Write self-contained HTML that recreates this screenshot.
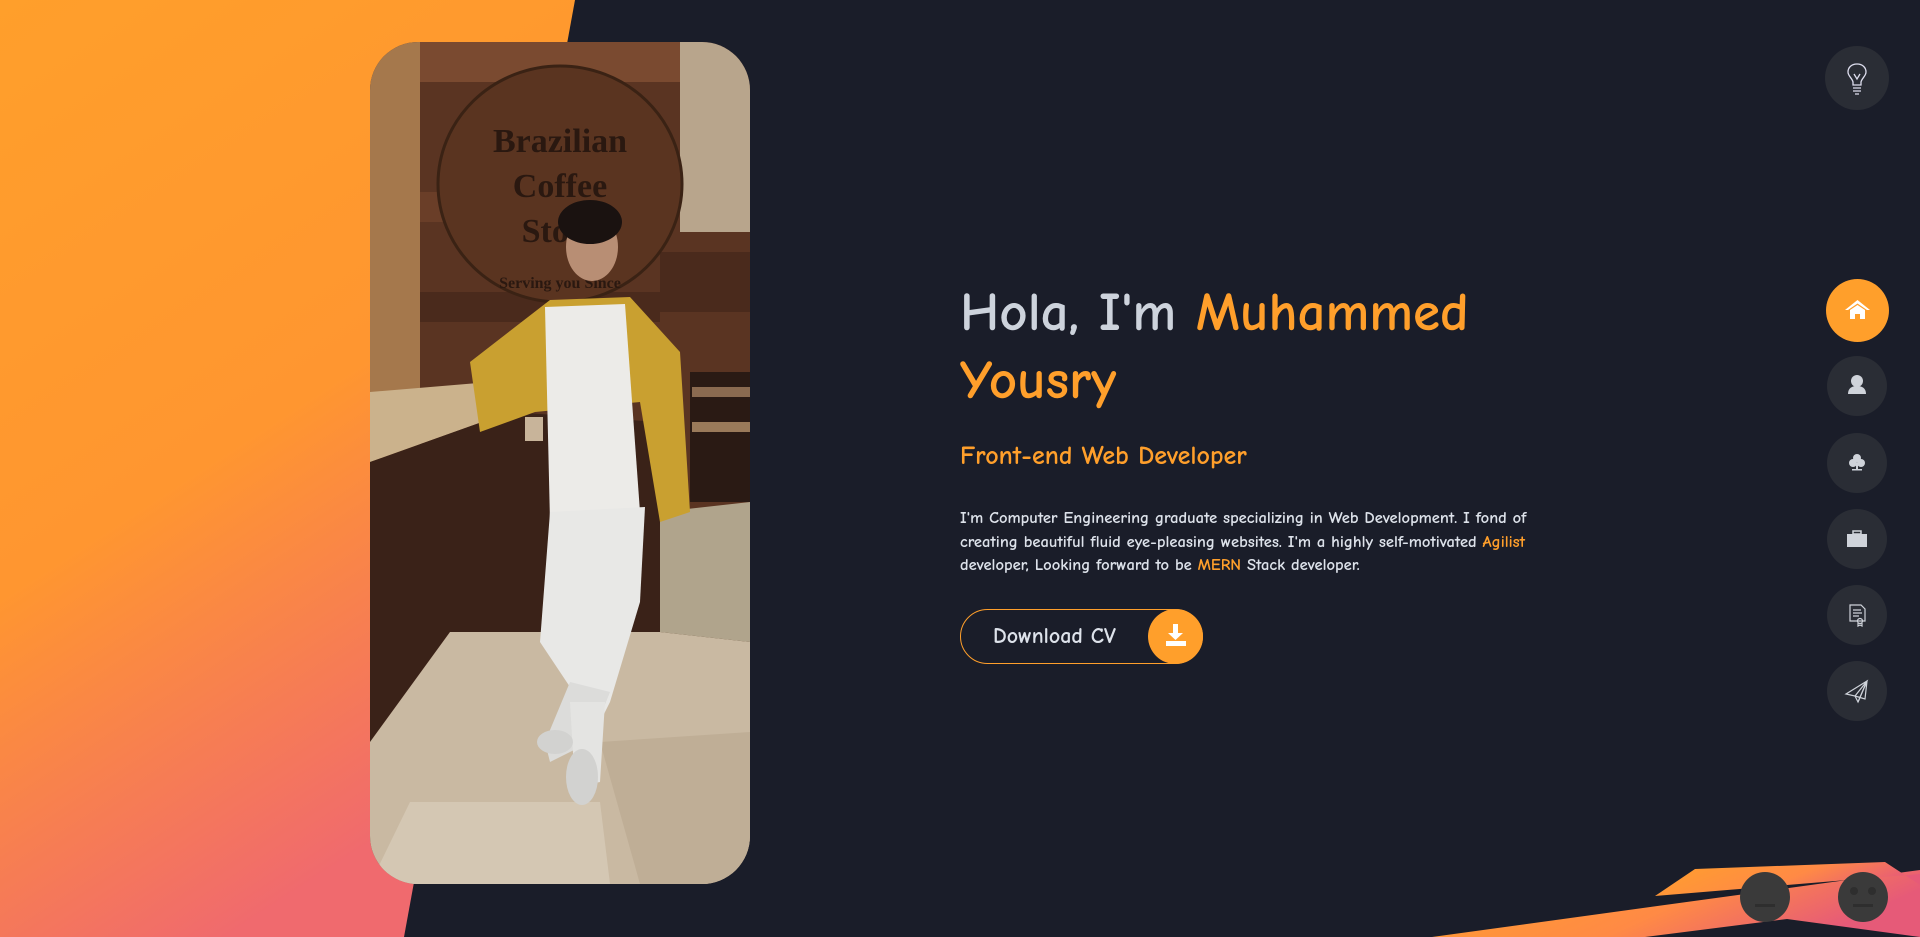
<!DOCTYPE html>
<html><head><meta charset="utf-8"><style>
*{margin:0;padding:0;box-sizing:border-box}
body{width:1920px;height:937px;overflow:hidden;background:#1a1d29;position:relative;font-family:"Comic Sans MS","Comic Neue","DejaVu Sans",sans-serif}
.bgl{position:absolute;left:0;top:0;width:1920px;height:937px}
.photo{position:absolute;left:370px;top:42px;width:380px;height:842px;border-radius:48px;overflow:hidden}
h1{position:absolute;left:960px;top:278px;font-size:55px;line-height:68px;font-weight:bold;color:#cdd3dc;width:600px}
.o{color:#ff9f2b}
h2{position:absolute;left:960px;top:441px;font-size:26px;color:#ff9f2b;font-weight:bold}
p{position:absolute;left:960px;top:507px;width:620px;font-size:16.5px;line-height:23.5px;color:#dde2ea;font-weight:bold}
.btn{position:absolute;left:960px;top:609px;width:243px;height:55px;border:1.5px solid #ff9f2b;border-radius:28px;color:#dde2ea;font-size:22px;font-weight:bold}
.btn span{position:absolute;left:32px;top:13px}
.btn .c{position:absolute;right:-1px;top:-1px;width:55px;height:55px;border-radius:50%;background:#ff9f2b}
.nav{position:absolute;left:1827px;width:60px;height:60px;border-radius:50%;background:#2a2d35}
</style></head><body>
<svg class="bgl" viewBox="0 0 1920 937">
<defs>
<linearGradient id="g1" x1="0" y1="0" x2="0.4" y2="1"><stop offset="0" stop-color="#ff9f2b"/><stop offset="0.55" stop-color="#ff9630"/><stop offset="1" stop-color="#f06a6e"/></linearGradient>
<linearGradient id="g2" x1="0" y1="0" x2="1" y2="0.3"><stop offset="0" stop-color="#ffa12b"/><stop offset="0.6" stop-color="#ff8a45"/><stop offset="1" stop-color="#e65a78"/></linearGradient>
</defs>
<polygon points="0,0 575,0 404,937 0,937" fill="url(#g1)"/>
<polygon points="1432,937 1920,870 1920,937 1787,919 1645,937" fill="url(#g2)"/>
<polygon points="1695,869 1885,862 1920,885 1920,874 1655,896" fill="url(#g2)"/>
<circle cx="1765" cy="897" r="25" fill="#3a3a3a"/>
<circle cx="1863" cy="897" r="25" fill="#3a3a3a"/>
<rect x="1755" y="904" width="20" height="3" fill="#2e2e2e"/>
<rect x="1853" y="904" width="20" height="3" fill="#2e2e2e"/>
<circle cx="1854" cy="891" r="4" fill="#2e2e2e"/><circle cx="1872" cy="891" r="4" fill="#2e2e2e"/>
</svg>

<div class="photo"><svg width="380" height="842" viewBox="0 0 380 842">
<rect width="380" height="842" fill="#5a3422"/>
<rect x="310" y="0" width="70" height="190" fill="#b8a58c"/>
<rect x="290" y="210" width="90" height="60" fill="#4a2a1c"/>
<rect x="0" y="0" width="50" height="420" fill="#a5784c"/>
<rect x="50" y="0" width="260" height="40" fill="#7a4a30"/>
<rect x="50" y="150" width="250" height="30" fill="#6a3e28"/>
<rect x="50" y="250" width="240" height="30" fill="#4a2a1c"/>
<ellipse cx="190" cy="142" rx="122" ry="118" fill="#5a3420" stroke="#3a2214" stroke-width="3"/>
<text x="190" y="110" text-anchor="middle" font-family="Liberation Serif,serif" font-weight="bold" font-size="34" fill="#2a1810">Brazilian</text>
<text x="190" y="155" text-anchor="middle" font-family="Liberation Serif,serif" font-weight="bold" font-size="34" fill="#2a1810">Coffee</text>
<text x="190" y="200" text-anchor="middle" font-family="Liberation Serif,serif" font-weight="bold" font-size="34" fill="#2a1810">Store</text>
<text x="190" y="246" text-anchor="middle" font-family="Liberation Serif,serif" font-weight="bold" font-size="16" fill="#2a1810">Serving you Since</text>
<rect x="320" y="330" width="60" height="130" fill="#2a1a14"/>
<rect x="322" y="345" width="58" height="10" fill="#8a6a50"/><rect x="322" y="380" width="58" height="10" fill="#9a7a5a"/>
<polygon points="0,350 120,340 140,370 0,420" fill="#cbb28c"/>
<polygon points="0,420 140,370 290,380 290,590 80,590 0,700" fill="#3a2218"/>
<polygon points="0,700 80,590 290,590 380,600 380,842 0,842" fill="#c9b9a2"/>
<polygon points="290,470 380,460 380,600 290,590" fill="#b0a48c"/>
<polygon points="230,700 380,690 380,842 270,842" fill="#bfae96"/>
<polygon points="0,842 40,760 230,760 240,842" fill="#d4c7b3"/>
<ellipse cx="222" cy="205" rx="26" ry="34" fill="#b88e74"/>
<ellipse cx="220" cy="180" rx="32" ry="22" fill="#1a1210"/>
<polygon points="100,320 180,258 260,255 310,310 320,470 290,480 270,360 165,370 110,390" fill="#c9a030"/>
<polygon points="175,265 255,262 270,470 180,480" fill="#ecebe8"/>
<polygon points="180,470 275,465 270,560 240,660 230,680 210,660 170,600" fill="#e8e8e6"/>
<polygon points="200,640 240,650 220,700 180,720 175,700" fill="#dcdcda"/>
<polygon points="200,660 235,660 230,740 205,745" fill="#e4e4e2"/>
<ellipse cx="212" cy="735" rx="16" ry="28" fill="#d2d2d0"/>
<ellipse cx="185" cy="700" rx="18" ry="12" fill="#d2d2d0"/>
<rect x="155" y="375" width="18" height="24" fill="#c8b49a"/>
</svg></div>

<h1>Hola, I'm <span class="o">Muhammed Yousry</span></h1>
<h2>Front-end Web Developer</h2>
<p>I'm Computer Engineering graduate specializing in Web Development. I fond of creating beautiful fluid eye-pleasing websites. I'm a highly self-motivated <span class="o">Agilist</span> developer, Looking forward to be <span class="o">MERN</span> Stack developer.</p>
<div class="btn"><span>Download CV</span><div class="c"><svg width="55" height="55" viewBox="0 0 55 55"><rect x="25" y="15" width="5" height="11" fill="#fff"/><polygon points="20,24 35,24 27.5,31" fill="#fff"/><rect x="18" y="32" width="20" height="5" fill="#fff"/></svg></div></div>

<div class="nav" style="top:46px;width:64px;height:64px;left:1825px"><svg width="64" height="64" viewBox="0 0 64 64" fill="none" stroke="#dde" stroke-width="1.3"><path d="M32 18c-6 0-9 4-9 8 0 4 4 6 5 10v3h8v-3c1-4 5-6 5-10 0-4-3-8-9-8z"/><path d="M28 42h8M28 45h8M30 48h4M29 28l3 5 3-5"/></svg></div>
<div class="nav" style="top:279px;left:1826px;width:63px;height:63px;background:#ff9f2b"><svg width="63" height="63" viewBox="0 0 63 63"><polygon points="31.5,21 19,31 22,31 31.5,24.5 41,31 44,31" fill="#fff"/><polygon points="24,31 31.5,26 39,31 39,40 34,40 34,35 29,35 29,40 24,40" fill="#fff"/></svg></div>
<div class="nav" style="top:356px"><svg width="60" height="60" viewBox="0 0 60 60" fill="#cfd3da"><circle cx="30" cy="25" r="6"/><path d="M21 38c0-6 4-8 9-8s9 2 9 8z"/></svg></div>
<div class="nav" style="top:433px"><svg width="60" height="60" viewBox="0 0 60 60" fill="#cfd3da"><circle cx="30" cy="25" r="4"/><circle cx="26" cy="30" r="4"/><circle cx="34" cy="30" r="4"/><rect x="29" y="30" width="2" height="6"/><rect x="25" y="36" width="10" height="1.5"/></svg></div>
<div class="nav" style="top:509px"><svg width="60" height="60" viewBox="0 0 60 60" fill="#cfd3da"><rect x="26" y="22" width="8" height="3" fill="none" stroke="#cfd3da" stroke-width="1.5"/><rect x="20" y="25" width="20" height="13"/></svg></div>
<div class="nav" style="top:585px"><svg width="60" height="60" viewBox="0 0 60 60" fill="none" stroke="#cfd3da" stroke-width="1.2"><path d="M23 20h11l4 4v12h-15z"/><path d="M26 25h8M26 28h9M26 31h6"/><circle cx="33" cy="36" r="2.5"/><path d="M31 38v3l2-1 2 1v-3"/></svg></div>
<div class="nav" style="top:661px"><svg width="60" height="60" viewBox="0 0 60 60" fill="none" stroke="#cfd3da" stroke-width="1.2"><path d="M40 20L19 33l9 2 3 6z"/><path d="M40 20L28 35M40 20l-9 21M40 20l-2 18-10-3"/></svg></div>
</body></html>
